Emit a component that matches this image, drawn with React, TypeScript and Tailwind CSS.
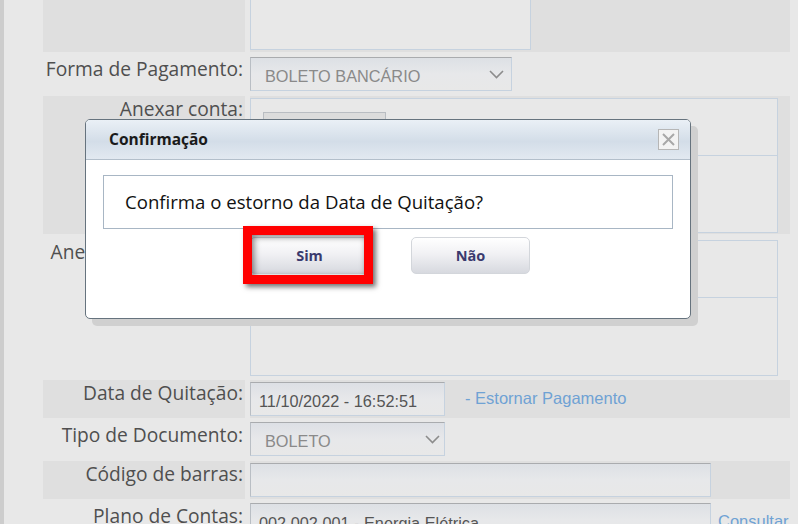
import React from "react";

const label = "text-right pr-[2px] text-[19.2px] leading-[26px] text-[#4f4f4f] font-['Open_Sans',sans-serif]";
const shade = "bg-[#dfdfdf]";
const inputBox =
  "border border-[#c6d2df] border-t-[#a9abae] border-l-[#b9bec4] bg-gradient-to-b from-[#dde0e5] via-[#e7e8ea] to-[#e8e8e8] font-['Liberation_Sans',Arial,sans-serif] text-[16.3px]";

function Chevron() {
  return (
    <svg width="15" height="9" viewBox="0 0 15 9" className="shrink-0">
      <path d="M1 1 L7.5 7.5 L14 1" fill="none" stroke="#8c8c8c" strokeWidth="1.6" />
    </svg>
  );
}

export default function App() {
  return (
    <div className="relative w-[798px] h-[524px] overflow-hidden bg-[#e8e8e8] flex">
      <div className="w-[4px] shrink-0 bg-[#cdcdcd]" />
      <div className="ml-[39px] w-[747px] flex flex-col gap-[4px]">
        {/* Row 1 */}
        <div className="flex gap-[5px] h-[52px] shrink-0">
          <div className={`w-[202px] ${shade}`} />
          <div className={`flex-1 ${shade}`}>
            <div className="w-[281px] h-[50px] border-x border-b border-[#c6d2df] bg-[#e8e8e8]" />
          </div>
        </div>
        {/* Row 2 */}
        <div className="flex gap-[5px] h-[36px] shrink-0">
          <div className={`w-[202px] ${label}`}>Forma de Pagamento:</div>
          <div className="flex-1 pt-[1px]">
            <div className={`w-[262px] h-[34px] ${inputBox} flex items-center pl-[14px] pr-[7px] pt-[5px] text-[#8a8a8a]`}>
              <span className="flex-1">BOLETO BANCÁRIO</span>
              <span className="-mt-[5px]"><Chevron /></span>
            </div>
          </div>
        </div>
        {/* Row 3 */}
        <div className="flex gap-[5px] h-[138px] shrink-0">
          <div className={`w-[202px] ${shade} ${label}`}>Anexar conta:</div>
          <div className={`flex-1 ${shade} pt-[2px]`}>
            <div className="w-[528px] h-[135px] border border-[#c6d2df] bg-[#e8e8e8] flex flex-col">
              <div className="h-[57px] border-b border-[#c6d2df] pl-[12px] pt-[13px]">
                <div className="w-[123px] h-[30px] border border-[#b9bdc2] bg-[#dcdcdc]" />
              </div>
            </div>
          </div>
        </div>
        {/* Row 4 */}
        <div className="flex gap-[5px] h-[138px] shrink-0">
          <div className={`w-[202px] ${label} pt-[1px]`}>Anexar comprovante:</div>
          <div className="flex-1 pt-[2px]">
            <div className="w-[528px] h-[136px] border border-[#c6d2df] flex flex-col">
              <div className="h-[57px] border-b border-[#c6d2df]" />
            </div>
          </div>
        </div>
        {/* Row 5 */}
        <div className="flex gap-[5px] h-[38px] shrink-0">
          <div className={`w-[202px] ${shade} ${label}`}>Data de Quitação:</div>
          <div className={`flex-1 ${shade} pt-[2px] flex items-start`}>
            <div className={`w-[195px] h-[34px] ${inputBox} flex items-center pl-[8px] pt-[4px] text-[#555555]`}>
              11/10/2022 - 16:52:51
            </div>
            <span className="ml-[20px] mt-[4px] font-['Liberation_Sans',Arial,sans-serif] text-[16.5px] text-[#6fa2d4]">
              - Estornar Pagamento
            </span>
          </div>
        </div>
        {/* Row 6 */}
        <div className="flex gap-[5px] h-[35px] shrink-0">
          <div className={`w-[202px] ${label}`}>Tipo de Documento:</div>
          <div className="flex-1">
            <div className={`w-[195px] h-[34px] ${inputBox} flex items-center pl-[14px] pr-[4px] pt-[5px] text-[#8a8a8a]`}>
              <span className="flex-1">BOLETO</span>
              <span className="-mt-[5px]"><Chevron /></span>
            </div>
          </div>
        </div>
        {/* Row 7 */}
        <div className="flex gap-[5px] h-[38px] shrink-0">
          <div className={`w-[202px] ${shade} ${label}`}>Código de barras:</div>
          <div className={`flex-1 ${shade} pt-[2px]`}>
            <div className={`w-[461px] h-[34px] ${inputBox}`} />
          </div>
        </div>
        {/* Row 8 */}
        <div className="flex gap-[5px] h-[38px] shrink-0">
          <div className={`w-[202px] ${label}`}>Plano de Contas:</div>
          <div className="flex-1 flex items-start">
            <div className={`w-[461px] h-[34px] ${inputBox} flex items-center pl-[8px] pt-[6px] text-[#555555]`}>
              002.002.001 - Energia Elétrica
            </div>
            <span className="ml-[7px] mt-[6px] font-['Liberation_Sans',Arial,sans-serif] text-[16.5px] text-[#6fa2d4]">
              Consultar
            </span>
          </div>
        </div>
      </div>

      {/* Modal */}
      <div className="absolute left-[85px] top-[119px] w-[606px] h-[200px] rounded-[5px] border border-[#66737e] bg-white shadow-[7px_7px_0_#d0d0d0] overflow-hidden flex flex-col">
        <div className="h-[40px] shrink-0 border-b border-[#b3bfcb] bg-[linear-gradient(#eaf0f6,#d3dde8_55%,#e2e9f1)] flex items-center pl-[23px] pr-[11px]">
          <span className="flex-1 font-['Open_Sans',sans-serif] font-bold text-[15.5px] text-[#1a1a1a] pt-[1px]">
            Confirmação
          </span>
          <div className="w-[21px] h-[21px] border border-[#b6b6b6] bg-[#f3f3f3] flex items-center justify-center">
            <svg width="15" height="15" viewBox="0 0 15 15">
              <path d="M2 2 L13 13 M13 2 L2 13" stroke="#a8a8a8" strokeWidth="2" />
            </svg>
          </div>
        </div>
        <div className="flex-1 px-[17px] pt-[15px]">
          <div className="h-[54px] border border-[#a8b6c4] flex items-center pl-[21px] font-['Open_Sans',sans-serif] text-[18.6px] leading-[26px] text-[#111111]">
            Confirma o estorno da Data de Quitação?
          </div>
          <div className="flex gap-[42px] pl-[147px] mt-[8px]">
            <button className="w-[119px] h-[37px] rounded-[5px] border border-[#d3d6db] bg-[linear-gradient(#ffffff,#f1f1f4_45%,#d7d9df)] font-['Open_Sans',sans-serif] font-bold text-[14.5px] text-[#3a3a6e]">
              Sim
            </button>
            <button className="w-[119px] h-[37px] rounded-[5px] border border-[#d3d6db] bg-[linear-gradient(#ffffff,#f1f1f4_45%,#d7d9df)] font-['Open_Sans',sans-serif] font-bold text-[14.5px] text-[#3a3a6e]">
              Não
            </button>
          </div>
        </div>
      </div>

      {/* Red highlight */}
      <div className="absolute left-[243px] top-[226px] w-[130px] h-[58px] border-[9px] border-[#ff0000] shadow-[inset_2px_2px_6px_rgba(0,0,0,0.5),3px_3px_5px_rgba(0,0,0,0.55)]" />
    </div>
  );
}
